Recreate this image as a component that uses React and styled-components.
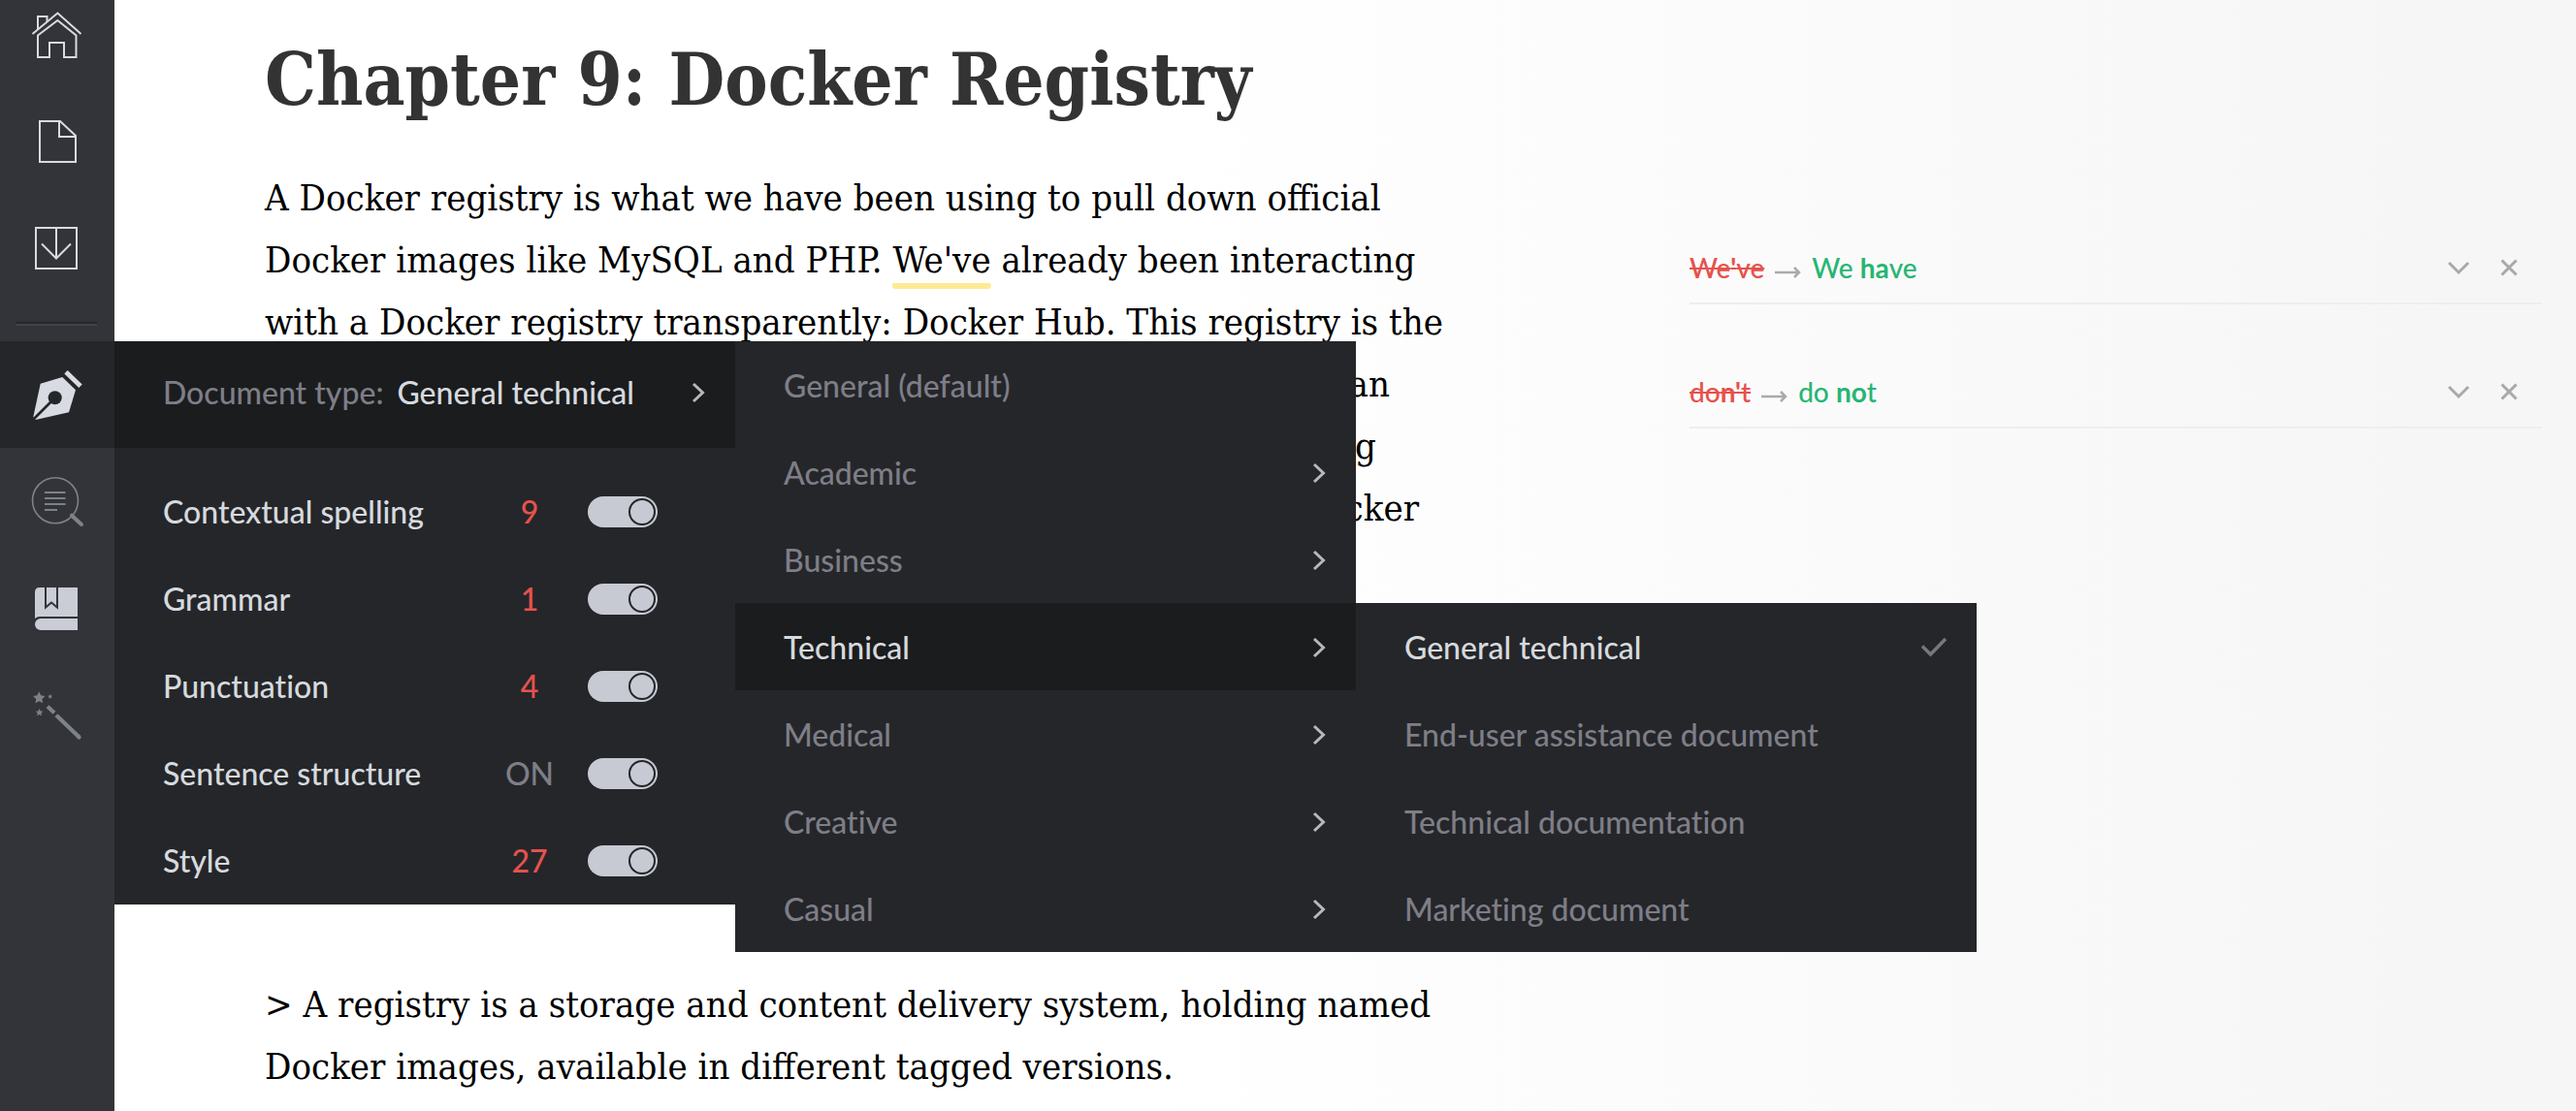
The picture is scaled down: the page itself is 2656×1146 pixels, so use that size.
import React from "react";
import styled, { createGlobalStyle } from "styled-components";

const color = {
  rail: "#333439",
  panel: "#25262a",
  dark: "#1b1c1e",
  light: "#d6dade",
  muted: "#7e7e87",
  icon: "#d9dbe2",
  iconDim: "#7d8289",
  red: "#e5524d",
  green: "#27b573",
};

const GlobalStyle = createGlobalStyle`
  *, *::after { box-sizing: border-box; }
  body {
    margin: 0;
    background: #fff;
    font-family: Lato, "Open Sans", sans-serif;
    font-weight: 500;
  }
  button { font: inherit; border: 0; padding: 0; background: none; cursor: pointer; }
  ul { list-style: none; margin: 0; padding: 0; }
`;

const Page = styled.div`
  display: flex;
  height: 100vh;
  overflow: hidden;
  background: linear-gradient(90deg, #fff 45%, #f6f6f6 95%);
`;

const Rail = styled.nav`
  flex: 0 0 118px;
  background: ${color.rail};
`;

/* The first group is scrolled partly out of view. */
const RailList = styled.ul`
  margin-top: ${(p) => (p.$scrolled ? "-18px" : "0")};
`;

const RailItem = styled.li`
  position: relative;
`;

const RailButton = styled.button`
  display: flex;
  align-items: center;
  justify-content: center;
  width: 100%;
  height: 110px;
  color: ${(p) => (p.$dim ? color.iconDim : color.icon)};
  background: ${(p) => (p.$active ? color.panel : "transparent")};
`;

const RailRule = styled.hr`
  height: 4px;
  margin: 20px 18px 16px 16px;
  border: 0;
  background: linear-gradient(#25262a 50%, #424349 50%);
`;

const Icon = styled.svg.attrs({ "aria-hidden": true })`
  display: block;
  flex: none;
  fill: none;
  stroke: currentColor;
`;

const Panel = styled.div`
  position: absolute;
  z-index: 2;
  top: 0;
  left: 100%;
  width: 640px;
  color: ${color.light};
  background: ${color.panel};
  font-size: 32px;
  line-height: 38px;
  font-variant-ligatures: none;
`;

const TypeWrap = styled.div`
  position: relative;
`;

const TypeButton = styled.button`
  display: flex;
  align-items: center;
  gap: 14px;
  width: 100%;
  height: 110px;
  padding: 0 30px 4px 50px;
  color: ${color.light};
  background: ${color.dark};
  text-align: left;
`;

const Caption = styled.span`
  color: ${color.muted};
`;

const TypeName = styled.span`
  flex: 1;
`;

const CheckList = styled.ul`
  padding-top: 21px;
`;

const CheckRow = styled.li`
  display: grid;
  grid-template-columns: 1fr 120px 72px;
  align-items: center;
  height: 90px;
  padding: 0 80px 0 50px;
`;

const Count = styled.span`
  text-align: center;
  color: ${(p) => (p.$muted ? color.muted : color.red)};
`;

const Switch = styled.input.attrs({ type: "checkbox", role: "switch" })`
  appearance: none;
  display: flex;
  align-items: center;
  justify-content: flex-start;
  width: 72px;
  height: 32px;
  margin: 0;
  padding: 0 2px;
  border-radius: 16px;
  background: #c7cad2;
  cursor: pointer;
  &:checked { justify-content: flex-end; }
  &::after {
    content: "";
    width: 28px;
    height: 28px;
    border: 2px solid ${color.panel};
    border-radius: 50%;
  }
`;

const MenuItem = styled.li`
  position: relative;
`;

const MenuButton = styled.button`
  display: flex;
  align-items: center;
  justify-content: space-between;
  width: 100%;
  height: 90px;
  padding: 2px 30px 0 50px;
  color: ${(p) => (p.$selected ? color.light : color.muted)};
  background: ${(p) => (p.$open ? color.dark : "transparent")};
  text-align: left;
`;

const Editor = styled.article`
  flex: 0 1 1624px;
  padding: 26px 0 0 155px;
  font-family: "DejaVu Serif Condensed", "DejaVu Serif", serif;
  font-weight: 400;
  color: #000;
`;

const Title = styled.h1`
  margin: 0 0 34px;
  font-size: 74px;
  line-height: 112px;
  font-weight: 700;
  color: #333;
  white-space: nowrap;
`;

const Paragraph = styled.p`
  margin: 0 0 448px;
  font-size: 38px;
  line-height: 64px;
  white-space: nowrap;
`;

const LineEnd = styled.span`
  display: block;
  width: ${(p) => p.$width}px;
  text-align: right;
`;

const Flag = styled.mark`
  color: inherit;
  padding-bottom: 8px;
  background: linear-gradient(#fdea93, #fdea93) bottom / 100% 6px no-repeat;
  border-radius: 3px;
`;

const Suggestions = styled.ul`
  flex: 1;
  padding: 240px 35px 0 0;
`;

const Suggestion = styled.li`
  display: flex;
  align-items: center;
  height: 74px;
  margin-bottom: 54px;
  border-bottom: 2px solid #eeeeee;
  font-size: 28px;
  line-height: 34px;
`;

const Removed = styled.del`
  color: ${color.red};
`;

const Inserted = styled.ins`
  flex: 1;
  color: ${color.green};
  text-decoration: none;
`;

const Arrow = styled(Icon)`
  margin: 10px 11px 0;
  color: #aaa;
`;

const ActionButton = styled.button`
  display: flex;
  align-items: center;
  justify-content: center;
  width: 52px;
  height: 40px;
  color: #a9a9a9;
  &:last-child { margin-right: 8px; }
`;

const Glyph = ({ children }) => (
  <Icon width="56" height="56" viewBox="0 0 56 56" strokeWidth="2">
    {children}
  </Icon>
);

const star = (cx, cy, r) =>
  Array.from({ length: 10 }, (_, i) => {
    const a = (Math.PI / 5) * i - Math.PI / 2;
    const d = i % 2 ? r * 0.5 : r;
    return `${cx + d * Math.cos(a)},${cy + d * Math.sin(a)}`;
  }).join(" ");

const HomeIcon = () => (
  <Glyph>
    <path d="M2.5 26 28.4 4.6 52.5 26" />
    <path d="M8 27.5 28.4 12 47.5 27.5V50H35V35H20v15H8Z" />
    <path d="M8 21V8h9.500v6" />
  </Glyph>
);
const FileIcon = () => (
  <Glyph>
    <path d="M10 6h21l16 15v27H10Z" />
    <path d="M30 6v16h17" />
  </Glyph>
);
const DownloadIcon = () => (
  <Glyph>
    <path d="M6 6h42v42H6ZM27 6v31M12 22.500l15 15 15-15" />
  </Glyph>
);
const PenIcon = () => (
  <Glyph>
    <path fill="currentColor" stroke="none" d="M10.700 16.700 33.300 10 47 23.300 40 46.300 5.700 54 3.300 51Z" />
    <circle cx="25.700" cy="31.300" r="7" fill={color.panel} stroke="none" />
    <path d="M25 32 3 54" stroke={color.panel} strokeWidth="2.600" />
    <path d="M37 4.700 52 19.300" strokeWidth="4.800" />
  </Glyph>
);
const SearchIcon = () => (
  <Glyph>
    <circle cx="26" cy="27.300" r="23.500" strokeWidth="1.600" />
    <path d="M15 19h21.500M15 25h21.500M15 31h21.500M15 37h13" />
    <path d="M43 42.700 53 52" strokeWidth="4" strokeLinecap="round" />
  </Glyph>
);
const BookIcon = () => (
  <Glyph>
    <path fill="#cacdd6" stroke="none" d="M10 7H49V37H10Q7 37 5 39V12Q5 7 10 7ZM11 39H49V51H11A6 6 0 0 1 11 39Z" />
    <path d="M16 7V27.500L22 22.500 28 27.500V7" stroke={color.rail} />
  </Glyph>
);
const WandIcon = () => (
  <Glyph>
    <g fill="currentColor" stroke="none">
      <polygon points={star(9.3, 11, 6.5)} />
      <polygon points={star(9.6, 26, 4)} />
      <polygon points={star(20.7, 9.5, 2.5)} />
    </g>
    <g strokeWidth="4.200">
      <path d="m18 19.700 7 6.500M27 28.700 50.500 51.300" />
      <path d="m50 51 .5.5" strokeLinecap="round" />
    </g>
  </Glyph>
);

const Chevron = () => (
  <Icon width="16" height="22" viewBox="0 0 16 22" strokeWidth="3">
    <path d="M3 2 12.500 11 3 20" stroke="#b8b8b8" />
  </Icon>
);
const Check = () => (
  <Icon width="28" height="22" viewBox="0 0 28 22" strokeWidth="3.500">
    <path d="M2 9.500 10.500 18 26 2" stroke="#77787a" />
  </Icon>
);

const checks = [
  ["Contextual spelling", "9"],
  ["Grammar", "1"],
  ["Punctuation", "4"],
  ["Sentence structure", "ON"],
  ["Style", "27"],
];
const categories = ["General (default)", "Academic", "Business", "Technical", "Medical", "Creative", "Casual"];
const technical = ["General technical", "End-user assistance document", "Technical documentation", "Marketing document"];

const TechnicalMenu = () => (
  <Panel as="ul">
    {technical.map((name, i) => (
      <MenuItem key={name}>
        <MenuButton $selected={i === 0}>
          {name}
          {i === 0 && <Check />}
        </MenuButton>
      </MenuItem>
    ))}
  </Panel>
);

const CategoryMenu = () => (
  <Panel as="ul">
    {categories.map((name, i) => (
      <MenuItem key={name}>
        <MenuButton $selected={name === "Technical"} $open={name === "Technical"}>
          {name}
          {i > 0 && <Chevron />}
        </MenuButton>
        {name === "Technical" && <TechnicalMenu />}
      </MenuItem>
    ))}
  </Panel>
);

const ChecksPanel = () => (
  <Panel>
    <TypeWrap>
      <TypeButton>
        <Caption>Document type:</Caption>
        <TypeName>General technical</TypeName>
        <Chevron />
      </TypeButton>
      <CategoryMenu />
    </TypeWrap>
    <CheckList>
      {checks.map(([name, count], i) => (
        <CheckRow key={name}>
          <label htmlFor={`check-${i}`}>{name}</label>
          <Count $muted={count === "ON"}>{count}</Count>
          <Switch id={`check-${i}`} defaultChecked />
        </CheckRow>
      ))}
    </CheckList>
  </Panel>
);

const SuggestionRow = ({ before, after }) => (
  <Suggestion>
    <Removed>{before}</Removed>
    <Arrow width="27" height="14" viewBox="0 0 27 14" strokeWidth="2.500">
      <path d="M0 7h25M20 2l5 5-5 5" />
    </Arrow>
    <Inserted>{after}</Inserted>
    <ActionButton aria-label="Expand">
      <Icon width="24" height="16" viewBox="0 0 24 16" strokeWidth="3">
        <path d="M2 3 12 13 22 3" />
      </Icon>
    </ActionButton>
    <ActionButton aria-label="Dismiss">
      <Icon width="20" height="20" viewBox="0 0 20 20" strokeWidth="3">
        <path d="M2.500 2.500 17.500 17.500M17.500 2.500 2.500 17.500" />
      </Icon>
    </ActionButton>
  </Suggestion>
);

export default function App() {
  return (
    <Page>
      <GlobalStyle />
      <Rail>
        <RailList $scrolled>
          <RailItem><RailButton aria-label="Home"><HomeIcon /></RailButton></RailItem>
          <RailItem><RailButton aria-label="New document"><FileIcon /></RailButton></RailItem>
          <RailItem><RailButton aria-label="Download"><DownloadIcon /></RailButton></RailItem>
        </RailList>
        <RailRule />
        <RailList>
          <RailItem>
            <RailButton $active aria-label="Writing checks"><PenIcon /></RailButton>
            <ChecksPanel />
          </RailItem>
          <RailItem><RailButton $dim aria-label="Search"><SearchIcon /></RailButton></RailItem>
          <RailItem><RailButton aria-label="Dictionary"><BookIcon /></RailButton></RailItem>
          <RailItem><RailButton $dim aria-label="Auto-correct"><WandIcon /></RailButton></RailItem>
        </RailList>
      </Rail>
      <Editor>
        <Title>Chapter 9: Docker Registry</Title>
        <Paragraph>
          A Docker registry is what we have been using to pull down official<br />
          Docker images like MySQL and PHP. <Flag>We've</Flag> already been interacting<br />
          with a Docker registry transparently: Docker Hub. This registry is the
          <LineEnd $width={1160}>an</LineEnd>
          <LineEnd $width={1146}>g</LineEnd>
          <LineEnd $width={1190}>cker</LineEnd>
        </Paragraph>
        <Paragraph>
          &gt; A registry is a storage and content delivery system, holding named<br />
          Docker images, available in different tagged versions.
        </Paragraph>
      </Editor>
      <Suggestions>
        <SuggestionRow before={<>We<b>'</b>ve</>} after={<>We <b>ha</b>ve</>} />
        <SuggestionRow before={<>do<b>n'</b>t</>} after={<>do <b>no</b>t</>} />
      </Suggestions>
    </Page>
  );
}
